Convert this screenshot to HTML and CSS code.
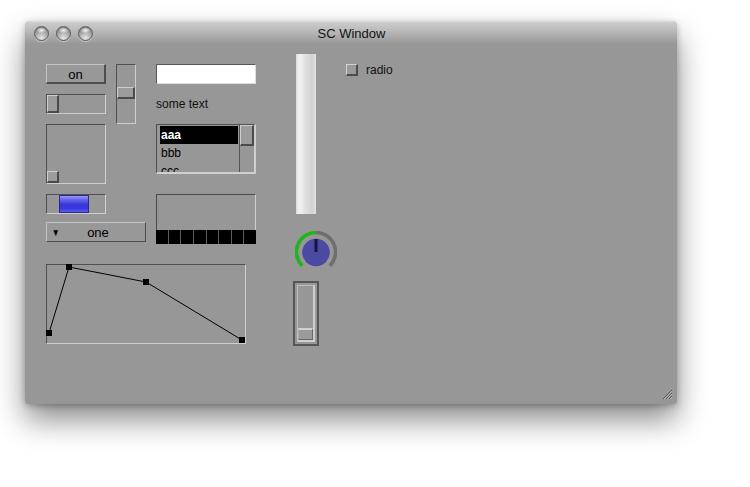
FILE: index.html
```html
<!DOCTYPE html>
<html>
<head>
<meta charset="utf-8">
<link rel="stylesheet" href="styles.css">
</head>
<body>
<div class="window">
  <div class="titlebar">
    <div class="lights">
      <span class="light"></span><span class="light"></span><span class="light"></span>
    </div>
    <div class="title">SC Window</div>
  </div>
  <div class="canvas">
    <div class="w button w-button">on</div>
    <div class="w inset w-hslider"><span class="thumb thumb-h"></span></div>
    <div class="w inset w-2d"><span class="thumb thumb-2d"></span></div>
    <div class="w inset w-range"><span class="range-bar"></span></div>
    <div class="w button w-popup"><span class="arrow">▼</span><span class="popup-label">one</span></div>
    <div class="w inset w-env">
      <svg width="200" height="80" viewBox="0 0 200 80">
        <polyline points="3,69 23,3 100,18 196,76" fill="none" stroke="#000" stroke-width="1"/>
        <rect x="0" y="66" width="6" height="6" fill="#000"/>
        <rect x="20" y="0" width="6" height="6" fill="#000"/>
        <rect x="97" y="15" width="6" height="6" fill="#000"/>
        <rect x="193" y="73" width="6" height="6" fill="#000"/>
      </svg>
    </div>
    <div class="w inset w-vslider"><span class="thumb thumb-v"></span></div>
    <div class="w w-field"></div>
    <div class="w w-static">some text</div>
    <div class="w inset w-list">
      <div class="list-items">
        <div class="item selected">aaa</div>
        <div class="item">bbb</div>
        <div class="item">ccc</div>
      </div>
      <div class="scrollbar"><span class="scroll-thumb"></span></div>
    </div>
    <div class="w inset w-multi">
      <div class="bars">
        <span></span><span></span><span></span><span></span><span></span><span></span><span></span><span></span>
      </div>
    </div>
    <div class="w w-big"></div>
    <div class="w w-knob">
      <svg width="42" height="42" viewBox="0 0 42 42">
        <path d="M7.2 34.8 A19.5 19.5 0 0 1 21 1.5" fill="none" stroke="#1fb51f" stroke-width="3.5"/>
        <path d="M21 1.5 A19.5 19.5 0 0 1 34.8 34.8" fill="none" stroke="#6e6e6e" stroke-width="3.5"/>
        <circle cx="21" cy="21.5" r="13.8" fill="#4a4aa3"/>
        <line x1="21" y1="8" x2="21" y2="21" stroke="#16163a" stroke-width="3"/>
      </svg>
    </div>
    <div class="w w-vbox"><div class="vbox-inner"><span class="vbox-thumb"></span></div></div>
    <div class="w w-check"><span class="checkbox"></span><span class="check-label">radio</span></div>
    <svg class="grip" width="12" height="12" viewBox="0 0 12 12">
      <path d="M11 2 L2 11 M11 5 L5 11 M11 8 L8 11" stroke="#555" stroke-width="1" fill="none"/>
      <path d="M11 3 L3 11 M11 6 L6 11 M11 9 L9 11" stroke="#bbb" stroke-width="1" fill="none"/>
    </svg>
  </div>
</div>
</body>
</html>
```
FILE: styles.css
```css
html, body {
  margin: 0;
  padding: 0;
  background: #ffffff;
}
body {
  width: 750px;
  height: 487px;
  overflow: hidden;
  font-family: "Liberation Sans", Arial, sans-serif;
}
.window {
  margin: 21px 0 0 25px;
  width: 652px;
  height: 383px;
  background: #979797;
  border-radius: 5px 5px 4px 4px;
  box-shadow: 0 16px 30px rgba(0,0,0,0.45), 0 2px 6px rgba(0,0,0,0.25);
  display: flex;
  flex-direction: column;
  overflow: hidden;
}
.titlebar {
  height: 23px;
  flex: none;
  position: relative;
  display: flex;
  align-items: center;
  justify-content: center;
  background: linear-gradient(#dedede 0, #cbcbcb 2px, #b8b8b8 45%, #989898 100%);
}
.lights {
  position: absolute;
  left: 9px;
  top: 5px;
  display: flex;
  gap: 7px;
}
.light {
  width: 15px;
  height: 15px;
  border-radius: 50%;
  box-sizing: border-box;
  border: 1px solid #5c5c5c;
  background:
    radial-gradient(ellipse 5px 3px at 50% 25%, rgba(255,255,255,0.95), rgba(255,255,255,0) 100%),
    radial-gradient(circle at 50% 85%, #e6e6e6 0, #b4b4b4 40%, #8a8a8a 75%, #707070 100%);
  box-shadow: 0 1px 0 rgba(255,255,255,0.45);
}
.title {
  font-size: 13px;
  color: #111;
  margin-top: 1px;
  margin-left: 1px;
}
.canvas {
  position: relative;
  flex: 1;
  margin-left: 1px;
  font-size: 12px;
  color: #000;
}
.w {
  position: absolute;
  box-sizing: border-box;
}
.button {
  border-top: 1px solid #c4c4c4;
  border-left: 1px solid #c4c4c4;
  border-right: 2px solid #4e4e4e;
  border-bottom: 2px solid #4e4e4e;
  background: #989898;
}
.inset {
  border-top: 1px solid #505050;
  border-left: 1px solid #505050;
  border-right: 1px solid #cfcfcf;
  border-bottom: 1px solid #cfcfcf;
  background: #979797;
}
.thumb {
  position: absolute;
  box-sizing: border-box;
  width: 12px;
  height: 12px;
  background: #9c9c9c;
  border-top: 1px solid #cfcfcf;
  border-left: 1px solid #cfcfcf;
  border-right: 2px solid #4a4a4a;
  border-bottom: 2px solid #4a4a4a;
}
.w-button {
  left: 20px; top: 20px; width: 60px; height: 20px;
  display: flex; align-items: center; justify-content: center;
  font-size: 13px;
  padding-top: 1px;
}
.w-hslider { left: 20px; top: 50px; width: 60px; height: 20px; }
.thumb-h { left: 0; top: 0; height: 18px; width: 12px; }
.w-2d { left: 20px; top: 80px; width: 60px; height: 60px; }
.thumb-2d { left: 0; bottom: 0; }
.w-range { left: 20px; top: 150px; width: 60px; height: 20px; }
.range-bar {
  position: absolute;
  left: 12px; top: 0; width: 30px; height: 18px;
  box-sizing: border-box;
  border: 1px solid #2a2a8a;
  background: linear-gradient(#9a9af4 0, #6a6aee 20%, #3434d8 55%, #3a3ae0 80%, #6060e8 100%);
}
.w-popup {
  left: 20px; top: 178px; width: 100px; height: 20px;
  display: flex; align-items: center;
  border-right-width: 1px; border-bottom-width: 1px;
}
.arrow {
  font-size: 10px;
  width: 16px;
  padding-left: 4px;
  box-sizing: border-box;
  transform: scaleX(0.8);
}
.popup-label {
  flex: 1;
  text-align: center;
  font-size: 13px;
  padding-right: 12px;
  padding-top: 1px;
}
.w-env { left: 20px; top: 220px; width: 200px; height: 80px; overflow: visible; }
.w-env svg { position: absolute; left: -1px; top: -1px; overflow: visible; }
.w-vslider { left: 90px; top: 20px; width: 20px; height: 60px; }
.thumb-v { left: 0; top: 22px; width: 18px; height: 12px; }
.w-field {
  left: 130px; top: 20px; width: 100px; height: 20px;
  background: #fff;
  border-top: 1px solid #555;
  border-left: 1px solid #555;
  border-right: 1px solid #ddd;
  border-bottom: 1px solid #ddd;
}
.w-static {
  left: 130px; top: 50px; height: 20px;
  display: flex; align-items: center;
  color: #111;
}
.w-list {
  left: 130px; top: 80px; width: 100px; height: 50px;
  display: flex;
  overflow: hidden;
  border-right-width: 2px;
  border-bottom-width: 2px;
}
.list-items {
  flex: 1;
  padding: 1px 0 0 3px;
}
.item {
  height: 18px;
  line-height: 18px;
  font-size: 12px;
  padding-left: 1px;
  color: #000;
}
.item.selected {
  background: #000;
  color: #fff;
  font-weight: bold;
  margin-right: 1px;
}
.scrollbar {
  width: 15px;
  flex: none;
  border-left: 1px solid #555;
  box-sizing: border-box;
  position: relative;
}
.scroll-thumb {
  position: absolute;
  left: 0; top: 0;
  width: 14px; height: 21px;
  box-sizing: border-box;
  background: #9c9c9c;
  border-top: 1px solid #cfcfcf;
  border-left: 1px solid #cfcfcf;
  border-right: 2px solid #4a4a4a;
  border-bottom: 2px solid #4a4a4a;
}
.w-multi {
  left: 130px; top: 150px; width: 100px; height: 50px;
  display: flex; flex-direction: column; justify-content: flex-end;
  border-bottom: none;
  border-top-color: #4a4a4a;
  border-left-color: #4a4a4a;
}
.bars {
  display: flex;
  gap: 1px;
  height: 14px;
  background: #5a5a5a;
  margin: 0 -1px 0 -1px;
}
.bars span {
  flex: 1;
  background: #000;
}
.w-big {
  left: 270px; top: 10px; width: 20px; height: 160px;
  background: linear-gradient(to right, #d9d9d9 0, #ededed 10%, #f0f0f0 25%, #e0e0e0 45%, #d6d6d6 70%, #d2d2d2 80%, #e2e2e2 100%);
}
.w-knob { left: 269px; top: 187px; width: 42px; height: 42px; }
.w-knob svg { display: block; }
.w-vbox {
  left: 267px; top: 237px; width: 26px; height: 65px;
  border: 2px solid #555;
  padding: 2px;
}
.vbox-inner {
  box-sizing: border-box;
  height: 100%;
  border-top: 1px solid #bcbcbc;
  border-left: 1px solid #bcbcbc;
  border-right: 2px solid #cfcfcf;
  border-bottom: 2px solid #cfcfcf;
  position: relative;
}
.vbox-thumb {
  position: absolute;
  left: 0; right: 0; bottom: 0;
  height: 12px;
  box-sizing: border-box;
  background: #9a9a9a;
  border-top: 2px solid #d0d0d0;
  border-left: 1px solid #b0b0b0;
  border-right: 1px solid #666;
  border-bottom: 1px solid #666;
}
.w-check {
  left: 320px; top: 20px; height: 12px;
  display: flex; align-items: center; gap: 8px;
}
.checkbox {
  width: 12px; height: 12px;
  box-sizing: border-box;
  background: #9a9a9a;
  border-top: 1px solid #d2d2d2;
  border-left: 1px solid #d2d2d2;
  border-right: 2px solid #4c4c4c;
  border-bottom: 2px solid #4c4c4c;
}
.check-label { font-size: 12px; color: #111; }
.grip { position: absolute; right: 4px; bottom: 4px; }
```
